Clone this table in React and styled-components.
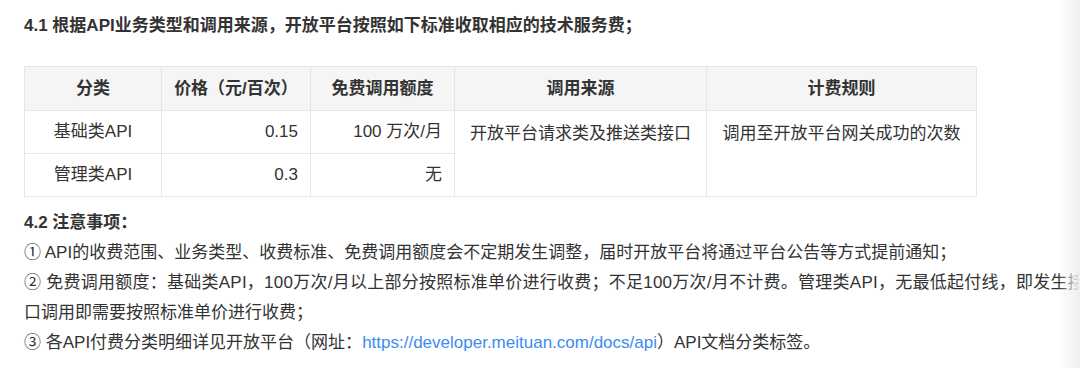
import React from "react";
import styled, { createGlobalStyle } from "styled-components";

// 全局样式
const GlobalStyle = createGlobalStyle`
  html, body {
    margin: 0;
    padding: 0;
    background: #fff;
    overflow: hidden;
  }
  body {
    font-family: "Liberation Sans", "Noto Sans CJK SC", sans-serif;
    color: #333;
  }
`;

const Page = styled.div`
  position: relative;
  width: 1080px;
  height: 368px;
  overflow: hidden;
`;

const Content = styled.div`
  width: 1120px;
  padding: 11px 0 0 24px;
  font-size: 17px;
  line-height: 30px;
`;

const SectionTitle = styled.div`
  font-weight: bold;
  margin-bottom: ${(p) => p.$gap || 0}px;
`;

const PriceTable = styled.table`
  border-collapse: collapse;
  table-layout: fixed;
  width: 952px;
  margin-bottom: 11px;
  font-size: 17px;
  color: #333;
`;

const HeadCell = styled.th`
  background: #f5f5f5;
  border: 1px solid #e6e6e6;
  height: 43px;
  padding: 0 12px;
  font-weight: bold;
  text-align: center;
  line-height: 24px;
`;

const Cell = styled.td`
  border: 1px solid #e6e6e6;
  height: 42px;
  padding: 0 12px;
  line-height: 24px;
  text-align: ${(p) => p.$align || "center"};
  vertical-align: ${(p) => (p.$top ? "top" : "middle")};
  padding-top: ${(p) => (p.$top ? "11px" : "0")};
`;

const Line = styled.div`
  white-space: nowrap;
  letter-spacing: ${(p) => p.$spread || 0}px;
`;

const Link = styled.a`
  color: #3b8cf0;
  text-decoration: none;
`;

// 右侧渐隐遮罩
const EdgeFade = styled.div`
  position: absolute;
  top: 0;
  right: 0;
  width: 22px;
  height: 100%;
  background: linear-gradient(to right, rgba(240, 240, 240, 0), #efefef);
  pointer-events: none;
`;

const columns = [137, 149, 144, 252, 270];

const rows = [
  { name: "基础类API", price: "0.15", free: "100 万次/月" },
  { name: "管理类API", price: "0.3", free: "无" },
];

const App = () => {
  return (
    <Page>
      <GlobalStyle />
      <Content>
        <SectionTitle $gap={25}>
          4.1 根据API业务类型和调用来源，开放平台按照如下标准收取相应的技术服务费；
        </SectionTitle>
        <PriceTable>
          <colgroup>
            {columns.map((w, i) => (
              <col key={i} style={{ width: w }} />
            ))}
          </colgroup>
          <thead>
            <tr>
              <HeadCell>分类</HeadCell>
              <HeadCell>价格（元/百次）</HeadCell>
              <HeadCell>免费调用额度</HeadCell>
              <HeadCell>调用来源</HeadCell>
              <HeadCell>计费规则</HeadCell>
            </tr>
          </thead>
          <tbody>
            {rows.map((row, i) => (
              <tr key={i}>
                <Cell>{row.name}</Cell>
                <Cell $align="right">{row.price}</Cell>
                <Cell $align="right">{row.free}</Cell>
                {i === 0 && (
                  <>
                    <Cell rowSpan={2} $top>
                      开放平台请求类及推送类接口
                    </Cell>
                    <Cell rowSpan={2} $top>
                      调用至开放平台网关成功的次数
                    </Cell>
                  </>
                )}
              </tr>
            ))}
          </tbody>
        </PriceTable>
        <SectionTitle>4.2 注意事项：</SectionTitle>
        <Line>
          ① API的收费范围、业务类型、收费标准、免费调用额度会不定期发生调整，届时开放平台将通过平台公告等方式提前通知；
        </Line>
        <Line $spread={0.25}>
          ② 免费调用额度：基础类API，100万次/月以上部分按照标准单价进行收费；不足100万次/月不计费。管理类API，无最低起付线，即发生接
        </Line>
        <Line>口调用即需要按照标准单价进行收费；</Line>
        <Line>
          ③ 各API付费分类明细详见开放平台（网址：
          <Link href="#">https://developer.meituan.com/docs/api</Link>）API文档分类标签。
        </Line>
      </Content>
      <EdgeFade />
    </Page>
  );
};

export default App;
